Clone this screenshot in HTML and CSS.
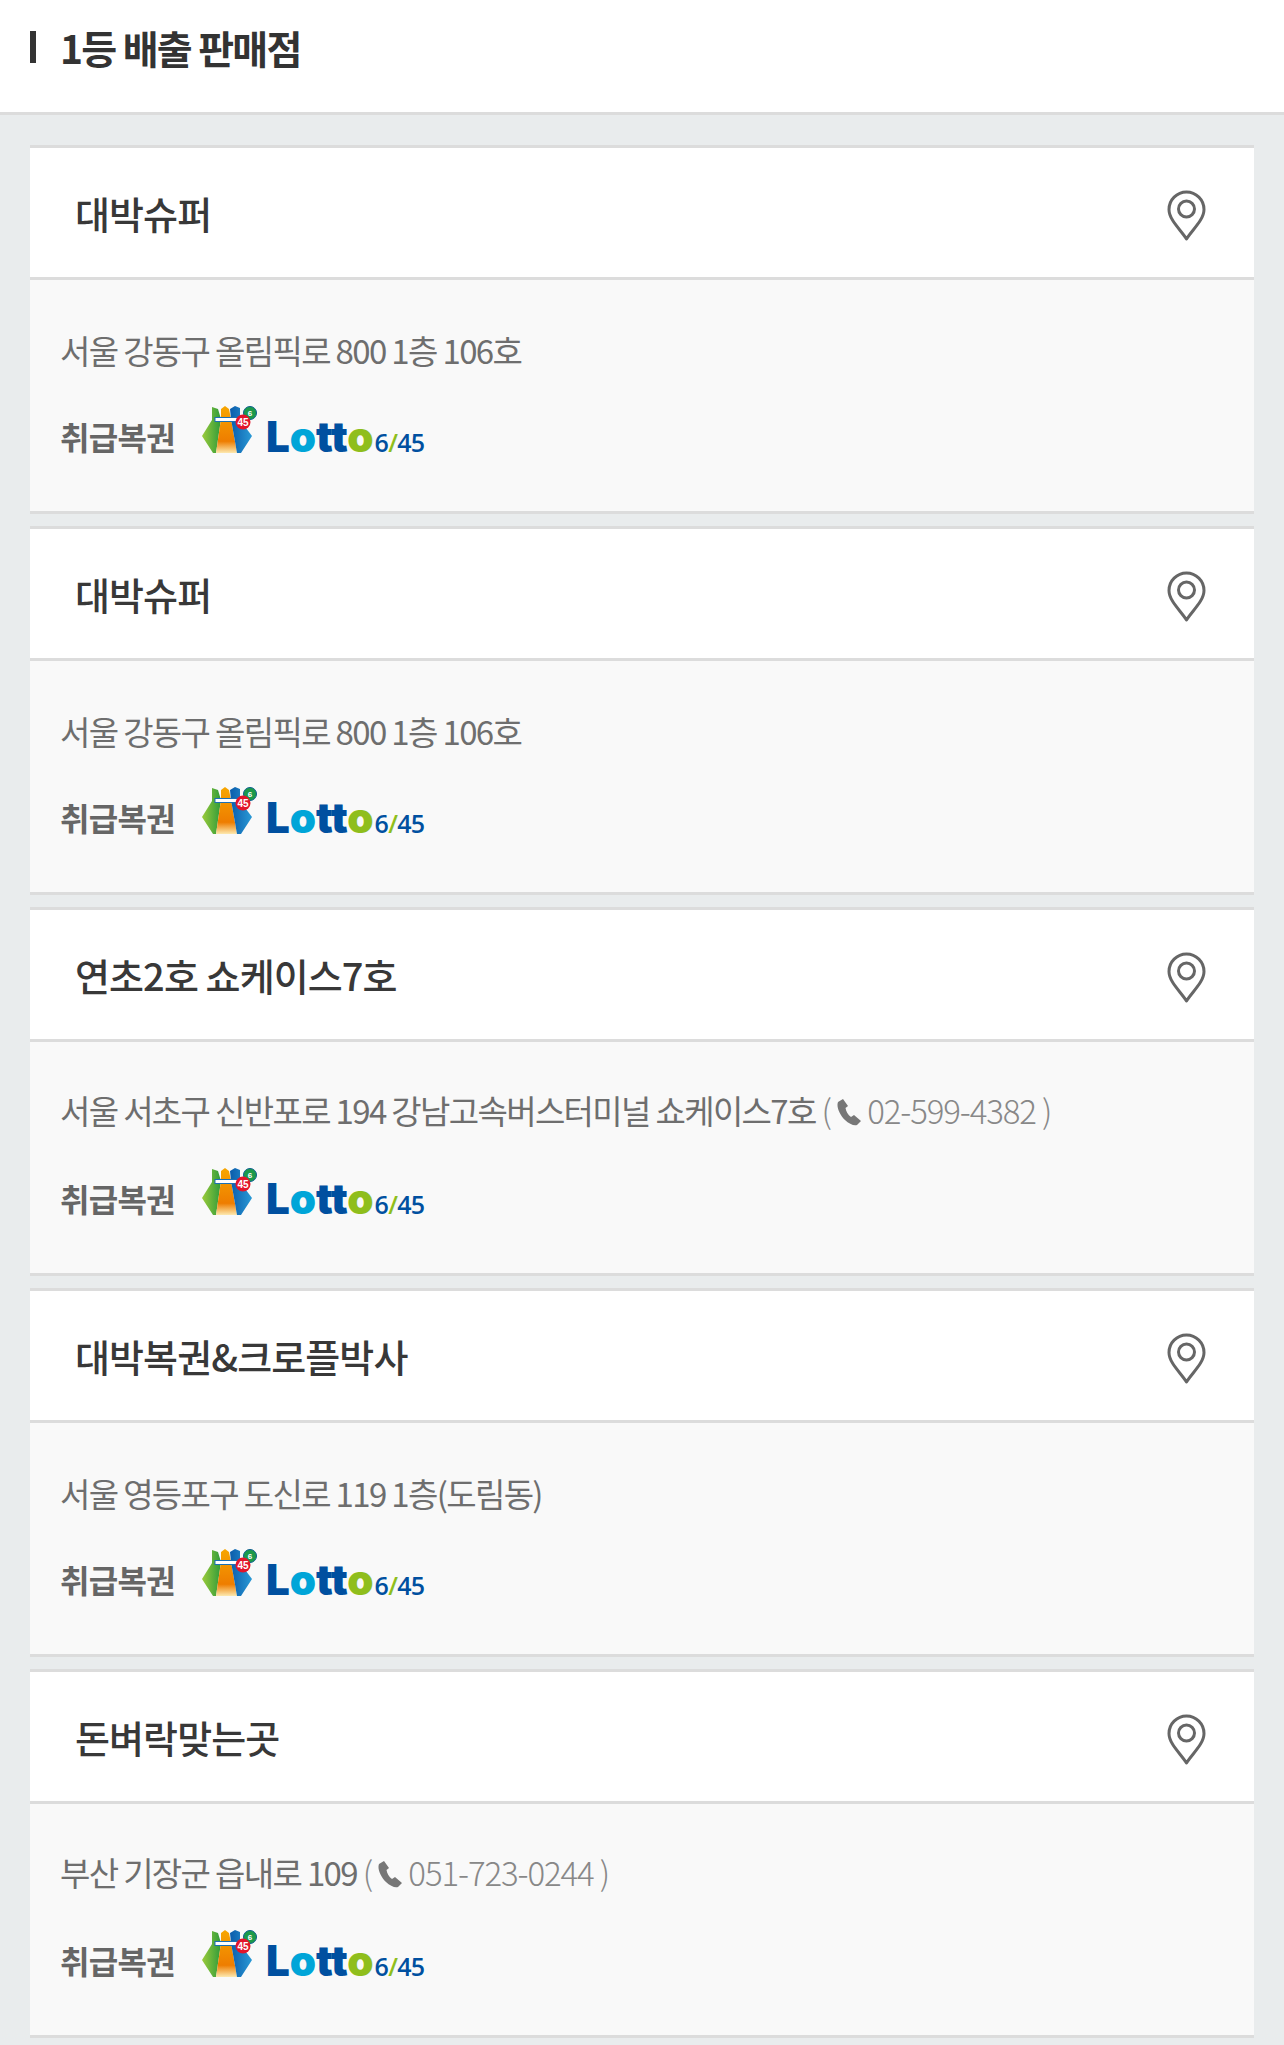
FILE: index.html
```html
<!doctype html>
<html>
	<head>
	<meta charset="utf-8">
	<title>1등 배출 판매점</title>
	<link rel="stylesheet" href="styles.css">
	</head>
	<body>
	<svg class="defs" width="0" height="0">
		<defs>
			<linearGradient id="g-green" x1="0" y1="0" x2="1" y2="0"><stop offset="0" stop-color="#9ccb3b"/><stop offset="1" stop-color="#2f9b3a"/></linearGradient>
			<linearGradient id="g-orange" x1="0" y1="0" x2="0" y2="1"><stop offset="0" stop-color="#f7a600"/><stop offset="0.75" stop-color="#ee7d00"/><stop offset="1" stop-color="#fde9b0"/></linearGradient>
			<linearGradient id="g-blue" x1="0" y1="0" x2="1" y2="0"><stop offset="0" stop-color="#0b5cab"/><stop offset="1" stop-color="#2a9ad6"/></linearGradient>
			<symbol id="pin" viewBox="0 0 39 51">
				<path d="M19.5 49 C14 40 2 30 2 19.5 A17.5 17.5 0 0 1 37 19.5 C37 30 25 40 19.5 49 Z" fill="none" stroke="#666" stroke-width="3" stroke-linejoin="round"/>
				<circle cx="19.5" cy="19" r="8" fill="none" stroke="#666" stroke-width="3"/>
			</symbol>
			<symbol id="bag" viewBox="0 0 60 52">
				<polygon points="13,3 19,5 22,15 17,49 14,49 3,32 13,16" fill="url(#g-green)"/>
				<polygon points="22,5 26,2 30,5 32,15 38,49 17,49 22,15" fill="url(#g-orange)"/>
				<polygon points="31,5 36,2 41,4 41,16 53,32 42,49 38,49 32,15" fill="url(#g-blue)"/>
				<rect x="16" y="13.5" width="24" height="4" fill="#fff" stroke="#1b6fb5" stroke-width="1"/>
				<circle cx="51" cy="9" r="6.5" fill="#1c9a4a" stroke="#0b5f8f" stroke-width="1"/>
				<circle cx="44" cy="18" r="7.5" fill="#e2152b"/>
				<text x="51" y="12" class="ball-small">6</text>
				<text x="44" y="21.5" class="ball">45</text>
			</symbol>
			<symbol id="phone" viewBox="0 0 24 28">
				<path d="M6 1 L1 4 C-1 9 3 17 8 22 C12 26 17 28 20 27 L24 23 L17 17 L14 19 C11 17 9 13 8.5 10 L11 8 Z" fill="#777"/>
			</symbol>
		</defs>
	</svg>
	<div class="page-head">
		<h2 class="page-title">1등 배출 판매점</h2>
	</div>
	<div class="list">
		<div class="card">
			<div class="card-head"><h3 class="shop">대박슈퍼</h3><svg class="pin"><use href="#pin"/></svg></div>
			<div class="card-body">
				<p class="addr">서울 강동구 올림픽로 800 1층 106호</p>
				<div class="kind"><span class="kind-label">취급복권</span><svg class="bag"><use href="#bag"/></svg><span class="lotto"><b class="dk">L</b><b class="cy">o</b><b class="dk">tt</b><b class="gr">o</b><i class="num">6<em>/</em>45</i></span></div>
			</div>
		</div>
		<div class="card">
			<div class="card-head"><h3 class="shop">대박슈퍼</h3><svg class="pin"><use href="#pin"/></svg></div>
			<div class="card-body">
				<p class="addr">서울 강동구 올림픽로 800 1층 106호</p>
				<div class="kind"><span class="kind-label">취급복권</span><svg class="bag"><use href="#bag"/></svg><span class="lotto"><b class="dk">L</b><b class="cy">o</b><b class="dk">tt</b><b class="gr">o</b><i class="num">6<em>/</em>45</i></span></div>
			</div>
		</div>
		<div class="card">
			<div class="card-head"><h3 class="shop">연초2호 쇼케이스7호</h3><svg class="pin"><use href="#pin"/></svg></div>
			<div class="card-body">
				<p class="addr has-tel">서울 서초구 신반포로 194 강남고속버스터미널 쇼케이스7호 <span class="tel">( <svg class="phone"><use href="#phone"/></svg> 02-599-4382 )</span></p>
				<div class="kind"><span class="kind-label">취급복권</span><svg class="bag"><use href="#bag"/></svg><span class="lotto"><b class="dk">L</b><b class="cy">o</b><b class="dk">tt</b><b class="gr">o</b><i class="num">6<em>/</em>45</i></span></div>
			</div>
		</div>
		<div class="card">
			<div class="card-head"><h3 class="shop">대박복권&amp;크로플박사</h3><svg class="pin"><use href="#pin"/></svg></div>
			<div class="card-body">
				<p class="addr">서울 영등포구 도신로 119 1층(도림동)</p>
				<div class="kind"><span class="kind-label">취급복권</span><svg class="bag"><use href="#bag"/></svg><span class="lotto"><b class="dk">L</b><b class="cy">o</b><b class="dk">tt</b><b class="gr">o</b><i class="num">6<em>/</em>45</i></span></div>
			</div>
		</div>
		<div class="card">
			<div class="card-head"><h3 class="shop">돈벼락맞는곳</h3><svg class="pin"><use href="#pin"/></svg></div>
			<div class="card-body">
				<p class="addr has-tel">부산 기장군 읍내로 109 <span class="tel">( <svg class="phone"><use href="#phone"/></svg> 051-723-0244 )</span></p>
				<div class="kind"><span class="kind-label">취급복권</span><svg class="bag"><use href="#bag"/></svg><span class="lotto"><b class="dk">L</b><b class="cy">o</b><b class="dk">tt</b><b class="gr">o</b><i class="num">6<em>/</em>45</i></span></div>
			</div>
		</div>
	</div>
	</body>
</html>
```

FILE: styles.css
```css
html, body {
	margin: 0;
	padding: 0;
}
body {
	background: #e9eced;
	font-family: "Noto Sans CJK KR", "Noto Sans", sans-serif;
	height: 2045px;
	overflow: hidden;
}
.defs {
	position: absolute;
}
.page-head {
	height: 112px;
	background: #fff;
	border-bottom: 3px solid #dcdcdc;
	display: flex;
	align-items: flex-start;
	padding-left: 30px;
}
.page-title {
	margin: 31px 0 0;
	font-size: 39px;
	font-weight: 700;
	letter-spacing: -1.7px;
	color: #333;
	border-left: 6px solid #333;
	padding-left: 24px;
	height: 32px;
	line-height: 32px;
}
.list {
	padding: 30px 30px 0;
	display: flex;
	flex-direction: column;
	gap: 12px;
}
.card {
	border-top: 3px solid #dcdcdc;
	border-bottom: 3px solid #dcdcdc;
	background: #f9f9f9;
}
.card-head {
	height: 129px;
	background: #fff;
	border-bottom: 3px solid #dcdcdc;
	display: flex;
	align-items: center;
	justify-content: space-between;
	padding: 0 48px 0 45px;
}
.shop {
	margin: 0;
	font-size: 38px;
	font-weight: 500;
	letter-spacing: -0.9px;
	color: #383838;
}
.pin {
	width: 39px;
	height: 51px;
	margin-top: 6px;
}
.card-body {
	height: 231px;
	padding: 0 30px;
	box-sizing: border-box;
}
.addr {
	margin: 0;
	padding-top: 48px;
	height: 120px;
	box-sizing: border-box;
	font-size: 33px;
	line-height: 44px;
	letter-spacing: -1.65px;
	color: #6e6e6e;
	white-space: nowrap;
}
.has-tel {
	padding-top: 46px;
}
.tel {
	color: #888;
	font-weight: 300;
	letter-spacing: -1.1px;
}
.phone {
	width: 24px;
	height: 28px;
	vertical-align: -2px;
}
.kind {
	display: flex;
	align-items: center;
	height: 72px;
}
.kind-label {
	font-size: 32px;
	font-weight: 700;
	letter-spacing: -0.7px;
	color: #666;
}
.bag {
	width: 60px;
	height: 52px;
	margin-left: 24px;
	margin-top: -13px;
}
.ball, .ball-small {
	font-family: "Liberation Sans", sans-serif;
	font-weight: 700;
	fill: #fff;
	text-anchor: middle;
}
.ball {
	font-size: 10px;
}
.ball-small {
	font-size: 8px;
}
.lotto {
	margin-left: 7px;
	padding-top: 2px;
	font-family: "Inter", sans-serif;
	font-size: 42px;
	line-height: 1;
	letter-spacing: 0;
	white-space: nowrap;
}
.lotto b {
	font-weight: 900;
}
.dk {
	color: #0050a0;
}
.cy {
	color: #00a5d8;
}
.gr {
	color: #8fbe1c;
}
.num {
	font-family: "Open Sans", sans-serif;
	font-style: normal;
	font-weight: 600;
	font-size: 25px;
	letter-spacing: -0.7px;
	color: #0050a0;
	margin-left: 1px;
}
.num em {
	font-style: normal;
	color: #8fbe1c;
}
```
